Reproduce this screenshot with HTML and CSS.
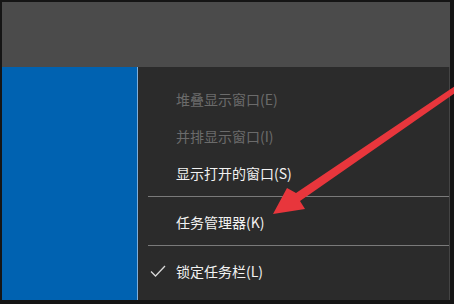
FILE: index.html
```html
<!DOCTYPE html>
<html lang="zh-CN">
<head>
  <meta charset="UTF-8">
  <meta name="viewport" content="width=device-width, initial-scale=1.0">
  <title>任务栏菜单</title>
  <link rel="stylesheet" href="styles.css">
</head>
<body>
  <div class="screen">
    <div class="topbar"></div>
    <div class="main">
      <div class="accent"></div>
      <ul class="menu">
        <li class="item disabled"><span class="mark"></span>堆叠显示窗口(E)</li>
        <li class="item disabled"><span class="mark"></span>并排显示窗口(I)</li>
        <li class="item"><span class="mark"></span>显示打开的窗口(S)</li>
        <li class="sep"></li>
        <li class="item"><span class="mark"></span>任务管理器(K)</li>
        <li class="sep"></li>
        <li class="item">
          <span class="mark">
            <svg width="16" height="12" viewBox="0 0 16 12"><path d="M1 6.5 L5.5 11 L15 1" fill="none" stroke="#d8d8d8" stroke-width="1.3"/></svg>
          </span>锁定任务栏(L)
        </li>
        <!-- 下一项只露出图标顶部 -->
        <li class="item">
          <span class="mark">
            <svg width="16" height="16" viewBox="0 0 16 16"><circle cx="8" cy="8" r="5" fill="none" stroke="#e0e0e0" stroke-width="1.4"/><circle cx="8" cy="8" r="2" fill="none" stroke="#e0e0e0" stroke-width="1.2"/></svg>
          </span>
        </li>
      </ul>
    </div>
  </div>

  <!-- 红色箭头标注 -->
  <svg class="arrow" width="454" height="304" viewBox="0 0 454 304">
    <polygon points="455,86 296,193 287,188 273,214 305,209 300,201 455,93" fill="#e8363c"/>
  </svg>
</body>
</html>
```

FILE: styles.css
```css
body {
  margin: 0;
  background-color: #151515;
  font-family: 'Noto Sans CJK SC', 'Noto Sans', sans-serif;
  overflow: hidden;
}
.screen {
  margin: 2px 4px 0 2px;
  height: 298px;
  display: flex;
  flex-direction: column;
  overflow: hidden;
}
.topbar {
  height: 65px;
  background-color: #4b4b4b;
}
.main {
  flex: 1;
  display: flex;
  overflow: hidden;
}
.accent {
  width: 135px;
  background-color: #0062b1;
  border-right: 1px solid #7eaedb;
}
.menu {
  flex: 1;
  margin: 0;
  padding: 13px 0 0 0;
  list-style: none;
  background-color: #2b2b2b;
  border-right: 1px solid #444;
}
.item {
  height: 37px;
  display: flex;
  align-items: center;
  padding-left: 10px;
  font-size: 14px;
  color: #f2f2f2;
  white-space: nowrap;
}
.item.disabled {
  color: #6b6b6b;
}
.mark {
  width: 28px;
  display: flex;
  align-items: center;
  padding-left: 2px;
  box-sizing: border-box;
}
.sep {
  height: 1px;
  margin: 5px 0 6px 10px;
  background-color: #7a7a7a;
}
.arrow {
  position: absolute;
  left: 0;
  top: 0;
}
```
